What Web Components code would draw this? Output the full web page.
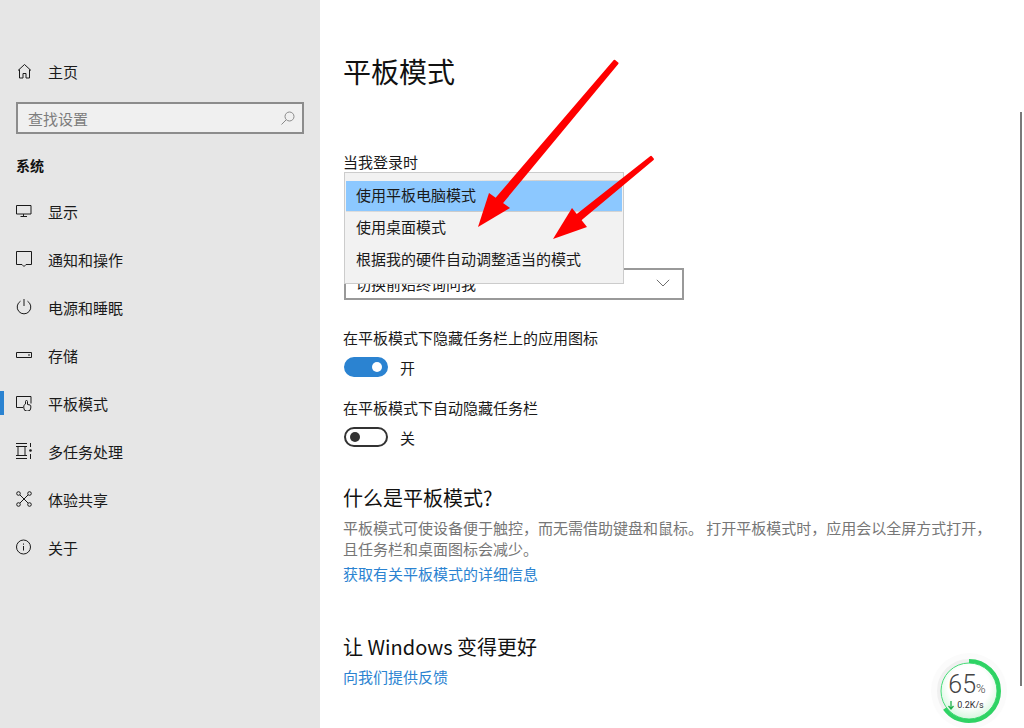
<!DOCTYPE html>
<html lang="zh-CN">
<head>
<meta charset="utf-8">
<title>平板模式</title>
<style>
    html, body { margin: 0; padding: 0; background: #fff; }
    body { font-family: "Noto Sans CJK SC", sans-serif; font-size: 15px; color: #1a1a1a; overflow: hidden; }
    info-section.better a { margin-top: -1px; }
</style>
</head>
<body>
<settings-app>
    <side-nav slot="nav">
        <nav-item>
            <svg slot="icon" width="16" height="16" viewBox="0 0 16 16" fill="none" stroke="#1a1a1a"><path d="M2 7.500 8.500 1.500 15 7.500M3.500 6.500v8.500h3.500v-4.500h3v4.500h3.500V6.500"/></svg>
            主页
        </nav-item>
        <search-box></search-box>
        <div class="group">系统</div>
        <nav-item>
            <svg slot="icon" width="16" height="16" viewBox="0 0 16 16" fill="none" stroke="#1a1a1a"><path d="M.5 2.500h14.500v8.500H.5zM7.500 11v2.500M4.500 13.500h6.500"/></svg>
            显示
        </nav-item>
        <nav-item>
            <svg slot="icon" width="16" height="16" viewBox="0 0 16 16" fill="none" stroke="#1a1a1a"><path d="M.5.500h15v13H10l-2 2-2-2H.5z"/></svg>
            通知和操作
        </nav-item>
        <nav-item>
            <svg slot="icon" width="16" height="16" viewBox="0 0 16 16" fill="none" stroke="#1a1a1a"><path d="M4.500 2.200a6.800 6.800 0 1 0 7 0M8 0v7"/></svg>
            电源和睡眠
        </nav-item>
        <nav-item>
            <svg slot="icon" width="16" height="16" viewBox="0 0 16 16" fill="none" stroke="#1a1a1a"><path d="M.5 5.500h15v5H.5z"/><path d="M12 8h2"/></svg>
            存储
        </nav-item>
        <nav-item active>
            <svg slot="icon" width="16" height="16" viewBox="0 0 16 16" fill="none" stroke="#1a1a1a"><path d="M7 12.500H.5V1.500h14.500v7"/><path d="M9.500 9V6.500a1 1 0 0 1 2 0v3l2.500.5a1 1 0 0 1 .8 1v2a3 3 0 0 1-3 3h-1a3 3 0 0 1-3-3v-2.500l1.700-1.500"/></svg>
            平板模式
        </nav-item>
        <nav-item>
            <svg slot="icon" width="16" height="16" viewBox="0 0 16 16" fill="none" stroke="#1a1a1a"><path d="M0 .5h11M0 15.500h11M2 3.500h7v9H2zM0 3.500h2M0 12.500h2M9 3.500h2M9 12.500h2"/><path d="M14.500 0v4M14.500 11v5"/><circle cx="14.500" cy="7.500" r="1.300" fill="#1a1a1a" stroke="none"/></svg>
            多任务处理
        </nav-item>
        <nav-item>
            <svg slot="icon" width="16" height="16" viewBox="0 0 16 16" fill="none" stroke="#1a1a1a"><circle cx="2.500" cy="2.500" r="1.800"/><circle cx="13.500" cy="2.500" r="1.800"/><circle cx="2.500" cy="13.500" r="1.800"/><circle cx="13.500" cy="13.500" r="1.800"/><path d="M4 4l8 8M12 4l-8 8"/></svg>
            体验共享
        </nav-item>
        <nav-item>
            <svg slot="icon" width="16" height="16" viewBox="0 0 16 16" fill="none" stroke="#1a1a1a"><circle cx="7.500" cy="8" r="7"/><path d="M7.500 7v4.500M7.500 4.500v1.200"/></svg>
            关于
        </nav-item>
    </side-nav>

    <h1 class="title">平板模式</h1>
    <mode-select label="当我登录时" value="切换前始终询问我"></mode-select>

    <toggle-switch on label="在平板模式下隐藏任务栏上的应用图标">开</toggle-switch>
    <toggle-switch label="在平板模式下自动隐藏任务栏">关</toggle-switch>

    <info-section heading="什么是平板模式?">
        <p>平板模式可使设备便于触控，而无需借助键盘和鼠标。 打开平板模式时，应用会以全屏方式打开，<br>且任务栏和桌面图标会减少。</p>
        <a href="#">获取有关平板模式的详细信息</a>
    </info-section>
    <info-section class="better" heading="让 Windows 变得更好">
        <a href="#">向我们提供反馈</a>
    </info-section>

    <arrow-overlay slot="over"></arrow-overlay>
    <speed-ball slot="over" percent="65" speed="0.2K/s"></speed-ball>
</settings-app>

<script>
class SettingsApp extends HTMLElement {
    connectedCallback() {
        this.attachShadow({ mode: 'open' });
        this.shadowRoot.innerHTML = `
            <style>
                :host {
                    display: flex;
                    position: relative;
                    width: 1024px;
                    height: 728px;
                    overflow: hidden;
                    background: #fff;
                }
                .nav { flex: 0 0 320px; }
                main {
                    flex: 1;
                    padding: 47px 20px 0 24px;
                    min-width: 0;
                }
                ::slotted(h1.title) {
                    margin: 0 0 55px -1px;
                    font-size: 28px;
                    font-weight: 400;
                    line-height: 48px;
                    color: #111;
                }
                ::slotted(info-section.better) { margin-top: 43px; }
                .scrollbar {
                    position: absolute;
                    left: 1020px;
                    top: 112px;
                    width: 2px;
                    height: 574px;
                    background: #7a7a7a;
                }
            </style>
            <div class="nav"><slot name="nav"></slot></div>
            <main><slot></slot></main>
            <div class="scrollbar"></div>
            <slot name="over"></slot>
        `;
    }
}

class SideNav extends HTMLElement {
    connectedCallback() {
        this.attachShadow({ mode: 'open' });
        this.shadowRoot.innerHTML = `
            <style>
                :host {
                    display: block;
                    height: 728px;
                    box-sizing: border-box;
                    padding-top: 47px;
                    background: #e6e6e6;
                }
                ::slotted(.group) {
                    padding: 19px 16px 0;
                    height: 24px;
                    margin-bottom: 10px;
                    line-height: 24px;
                    font-weight: 700;
                    font-size: 14px;
                    color: #111;
                }
            </style>
            <slot></slot>
        `;
    }
}

class NavItem extends HTMLElement {
    connectedCallback() {
        this.attachShadow({ mode: 'open' });
        this.shadowRoot.innerHTML = `
            <style>
                :host {
                    display: flex;
                    align-items: center;
                    gap: 16px;
                    position: relative;
                    height: 48px;
                    padding-left: 16px;
                    font-size: 15px;
                    color: #1a1a1a;
                }
                :host([active])::before {
                    content: '';
                    position: absolute;
                    left: 0;
                    top: 12px;
                    width: 4px;
                    height: 24px;
                    background: #2b83d1;
                }
                .icon { display: flex; width: 16px; height: 16px; }
            </style>
            <span class="icon"><slot name="icon"></slot></span>
            <span><slot></slot></span>
        `;
    }
}

class SearchBox extends HTMLElement {
    connectedCallback() {
        this.attachShadow({ mode: 'open' });
        this.shadowRoot.innerHTML = `
            <style>
                :host { display: block; padding: 7px 16px 0; }
                .box {
                    display: flex;
                    align-items: center;
                    justify-content: space-between;
                    box-sizing: border-box;
                    height: 32px;
                    padding: 0 7px 0 10px;
                    border: 2px solid #8c8c8c;
                    background: #f0f0f0;
                    color: #7d7d7d;
                    font-size: 15px;
                }
                svg { display: block; }
            </style>
            <div class="box">
                <span>查找设置</span>
                <svg width="14" height="14" viewBox="0 0 14 14" fill="none" stroke="#8a8a8a"><circle cx="8.500" cy="5.500" r="4.500"/><path d="M5.200 8.800.5 13.500"/></svg>
            </div>
        `;
    }
}

class ModeSelect extends HTMLElement {
    connectedCallback() {
        const label = this.getAttribute('label');
        const value = this.getAttribute('value');
        this.attachShadow({ mode: 'open' });
        this.shadowRoot.innerHTML = `
            <style>
                :host { display: block; position: relative; height: 176px; }
                .label { line-height: 24px; font-size: 15px; height: 31px; margin-left: -1px; color: #1a1a1a; }
                .select {
                    display: flex;
                    align-items: center;
                    justify-content: space-between;
                    box-sizing: border-box;
                    width: 340px;
                    height: 32px;
                    margin-top: 87px;
                    padding: 0 12px 2px 10px;
                    border: 2px solid #999;
                    background: #fff;
                    font-size: 15px;
                    color: #1a1a1a;
                }
                .popup {
                    position: absolute;
                    left: 0;
                    top: 22px;
                    box-sizing: border-box;
                    width: 280px;
                    height: 112px;
                    padding: 8px 1px;
                    background: #f2f2f2;
                    border: 1px solid #ccc;
                    font-size: 15px;
                    color: #1a1a1a;
                }
                .opt { height: 32px; line-height: 30px; padding-left: 10px; }
                .opt.sel { position: relative; background: #8cc8ff; height: 30px; line-height: 28px; margin-bottom: 1px; }
                .opt.sel::before, .opt.sel::after {
                    content: '';
                    position: absolute;
                    left: 0;
                    right: 0;
                    height: 1px;
                }
                .opt.sel::before { top: -1px; background: linear-gradient(90deg, #f2f2f2 35%, #d0d0d0 70%, #dcdcdc); }
                .opt.sel::after { bottom: -1px; background: linear-gradient(90deg, #dedede, #c9c9c9 45%, #d4d4d4); }
                svg { display: block; }
            </style>
            <div class="label">${label}</div>
            <div class="select">
                <span>${value}</span>
                <svg width="14" height="8" viewBox="0 0 14 8" fill="none" stroke="#6e6e6e"><path d="M.8.800 7 7l6.200-6.200"/></svg>
            </div>
            <div class="popup">
                <div class="opt sel">使用平板电脑模式</div>
                <div class="opt">使用桌面模式</div>
                <div class="opt">根据我的硬件自动调整适当的模式</div>
            </div>
        `;
    }
}

class ToggleSwitch extends HTMLElement {
    connectedCallback() {
        const label = this.getAttribute('label');
        this.attachShadow({ mode: 'open' });
        this.shadowRoot.innerHTML = `
            <style>
                :host { display: block; height: 70px; font-size: 15px; color: #1a1a1a; }
                .label { line-height: 24px; height: 24px; margin: 0 0 5px -1px; }
                .row { display: flex; align-items: center; gap: 12px; height: 24px; }
                .track {
                    display: flex;
                    align-items: center;
                    justify-content: flex-start;
                    box-sizing: border-box;
                    width: 44px;
                    height: 20px;
                    padding: 0 4px;
                    border-radius: 10px;
                    border: 2px solid #333;
                    background: #fff;
                }
                .knob { width: 10px; height: 10px; border-radius: 50%; background: #333; }
                :host([on]) .track { justify-content: flex-end; border-color: #2b83d1; background: #2b83d1; }
                :host([on]) .knob { background: #fff; }
            </style>
            <div class="label">${label}</div>
            <div class="row">
                <span class="track"><span class="knob"></span></span>
                <span><slot></slot></span>
            </div>
        `;
    }
}

class InfoSection extends HTMLElement {
    connectedCallback() {
        const heading = this.getAttribute('heading');
        this.attachShadow({ mode: 'open' });
        this.shadowRoot.innerHTML = `
            <style>
                :host { display: block; margin-top: 14px; margin-left: -1px; }
                h2 {
                    margin: 0 0 1px;
                    font-size: 20px;
                    font-weight: 400;
                    line-height: 36px;
                    color: #111;
                }
                ::slotted(p) {
                    margin: 0 0 3px;
                    font-size: 15px;
                    line-height: 21px;
                    color: #767676;
                }
                ::slotted(a) {
                    display: block;
                    line-height: 24px;
                    font-size: 15px;
                    color: #2b83d1;
                    text-decoration: none;
                }
            </style>
            <h2>${heading}</h2>
            <slot></slot>
        `;
    }
}

class ArrowOverlay extends HTMLElement {
    connectedCallback() {
        this.attachShadow({ mode: 'open' });
        this.shadowRoot.innerHTML = `
            <style>
                :host { position: absolute; left: 0; top: 0; width: 1024px; height: 728px; pointer-events: none; }
                svg { display: block; }
            </style>
            <svg width="1024" height="728" viewBox="0 0 1024 728" fill="#ff0000">
                <path d="M617.500 63.300 614.500 60.700 495.300 199.700 500.700 204.300z" stroke="#ff0000" stroke-width="2" stroke-linejoin="round"/>
                <path d="M478 227 489 193 510 208z"/>
                <path d="M652.950 159.200 651.050 156.800 576.100 215.700 579.900 220.300z" stroke="#ff0000" stroke-width="2" stroke-linejoin="round"/>
                <path d="M553 239 572 208 587 227z"/>
            </svg>
        `;
    }
}

class SpeedBall extends HTMLElement {
    connectedCallback() {
        const percent = this.getAttribute('percent');
        const speed = this.getAttribute('speed');
        this.attachShadow({ mode: 'open' });
        this.shadowRoot.innerHTML = `
            <style>
                :host {
                    position: absolute;
                    left: 934px;
                    top: 656px;
                    width: 70px;
                    height: 70px;
                    font-family: Roboto, sans-serif;
                }
                svg { position: absolute; left: 0; top: 0; overflow: visible; }
                .txt {
                    position: absolute;
                    left: 0;
                    right: 0;
                    top: 15px;
                    display: flex;
                    flex-direction: column;
                    align-items: center;
                }
                .pct { font-size: 25px; line-height: 28px; color: #444; font-weight: 300; padding-right: 4px; }
                .pct small { font-size: 13px; }
                .spd { display: flex; align-items: center; gap: 3px; font-size: 9px; line-height: 12px; color: #333; margin-top: -4px; padding-right: 6px; }
            </style>
            <svg width="70" height="70" viewBox="0 0 70 70">
                <defs>
                    <radialGradient id="fill" cx=".5" cy=".42" r=".62">
                        <stop offset="0" stop-color="#ffffff"/>
                        <stop offset=".6" stop-color="#ffffff"/>
                        <stop offset="1" stop-color="#cff5d9"/>
                    </radialGradient>
                </defs>
                <circle cx="35" cy="35" r="38" fill="#fbfbfb"/>
                <circle cx="35" cy="35" r="30" fill="#fff" stroke="#f0f0f0" stroke-width="4"/>
                <circle cx="35" cy="35" r="28" fill="url(#fill)" stroke="#46dc78" stroke-width="1"/>
                <circle cx="35" cy="35" r="30" fill="none" stroke="#2ed364" stroke-width="4"
                    pathLength="100" stroke-dasharray="65 35" transform="rotate(-90 35 35)"/>
            </svg>
            <div class="txt">
                <div class="pct">${percent}<small>%</small></div>
                <div class="spd">
                    <svg style="position:static" width="6" height="9" viewBox="0 0 6 9" fill="none" stroke="#22b14c" stroke-width="1.300"><path d="M3 0v8M.5 5 3 8l2.500-3"/></svg>
                    <span>${speed}</span>
                </div>
            </div>
        `;
    }
}

customElements.define('settings-app', SettingsApp);
customElements.define('side-nav', SideNav);
customElements.define('nav-item', NavItem);
customElements.define('search-box', SearchBox);
customElements.define('mode-select', ModeSelect);
customElements.define('toggle-switch', ToggleSwitch);
customElements.define('info-section', InfoSection);
customElements.define('arrow-overlay', ArrowOverlay);
customElements.define('speed-ball', SpeedBall);
</script>
</body>
</html>
